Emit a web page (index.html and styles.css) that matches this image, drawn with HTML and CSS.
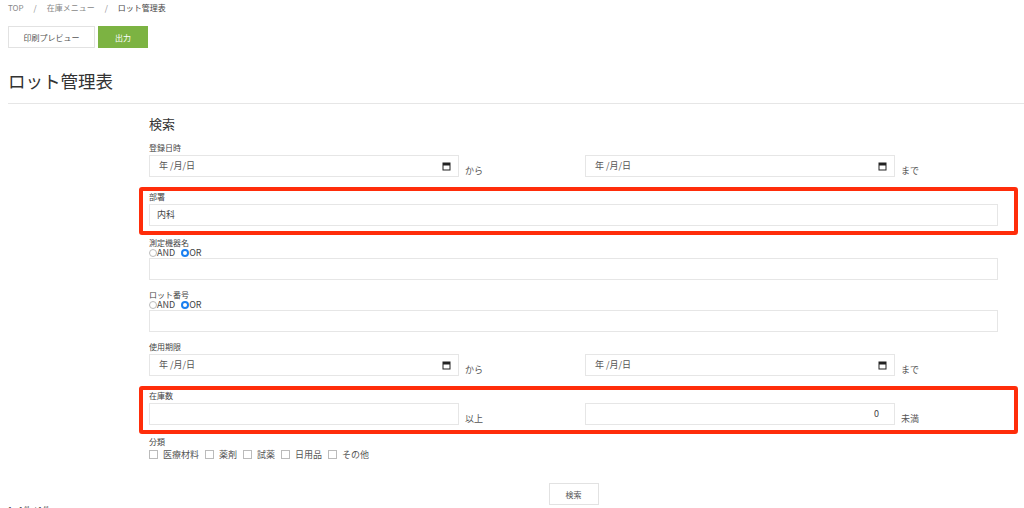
FILE: index.html
```html
<!DOCTYPE html>
<html lang="ja">
<head>
    <meta charset="UTF-8">
    <meta name="viewport" content="width=device-width, initial-scale=1.0">
    <title>ロット管理表</title>
    <link rel="stylesheet" href="styles.css">
</head>
<body>
    <div class="breadcrumb">
        <span>TOP</span>
        <span class="sep">/</span>
        <span>在庫メニュー</span>
        <span class="sep">/</span>
        <span class="current">ロット管理表</span>
    </div>

    <div class="actions">
        <button class="btn">印刷プレビュー</button>
        <button class="btn btn-green">出力</button>
    </div>

    <h1 class="page-title">ロット管理表</h1>
    <hr class="divider">

    <div class="search">
        <h2 class="search-title">検索</h2>

        <div class="group">
            <div class="label">登録日時</div>
            <div class="range">
                <div class="input date"><span>年 /月/日</span><svg class="cal" viewBox="0 0 9 9"><rect x="1" y="1" width="7" height="7" fill="none" stroke="#222" stroke-width="1"/><rect x="1" y="1" width="7" height="2.5" fill="#222"/></svg></div>
                <div class="suffix">から</div>
                <div class="input date"><span>年 /月/日</span><svg class="cal" viewBox="0 0 9 9"><rect x="1" y="1" width="7" height="7" fill="none" stroke="#222" stroke-width="1"/><rect x="1" y="1" width="7" height="2.5" fill="#222"/></svg></div>
                <div class="suffix">まで</div>
            </div>
        </div>

        <div class="group marked">
            <div class="label">部署</div>
            <div class="input wide">内科</div>
        </div>

        <div class="group">
            <div class="label">測定機器名</div>
            <div class="radios">
                <span class="radio"></span><span>AND</span>
                <span class="radio checked"></span><span>OR</span>
            </div>
            <div class="input wide"></div>
        </div>

        <div class="group">
            <div class="label">ロット番号</div>
            <div class="radios">
                <span class="radio"></span><span>AND</span>
                <span class="radio checked"></span><span>OR</span>
            </div>
            <div class="input wide"></div>
        </div>

        <div class="group">
            <div class="label">使用期限</div>
            <div class="range">
                <div class="input date"><span>年 /月/日</span><svg class="cal" viewBox="0 0 9 9"><rect x="1" y="1" width="7" height="7" fill="none" stroke="#222" stroke-width="1"/><rect x="1" y="1" width="7" height="2.5" fill="#222"/></svg></div>
                <div class="suffix">から</div>
                <div class="input date"><span>年 /月/日</span><svg class="cal" viewBox="0 0 9 9"><rect x="1" y="1" width="7" height="7" fill="none" stroke="#222" stroke-width="1"/><rect x="1" y="1" width="7" height="2.5" fill="#222"/></svg></div>
                <div class="suffix">まで</div>
            </div>
        </div>

        <div class="group marked">
            <div class="label">在庫数</div>
            <div class="range">
                <div class="input"></div>
                <div class="suffix">以上</div>
                <div class="input number">0</div>
                <div class="suffix">未満</div>
            </div>
        </div>

        <div class="group">
            <div class="label">分類</div>
            <div class="checks">
                <span class="check"></span><span>医療材料</span>
                <span class="check"></span><span>薬剤</span>
                <span class="check"></span><span>試薬</span>
                <span class="check"></span><span>日用品</span>
                <span class="check"></span><span>その他</span>
            </div>
        </div>

        <div class="submit">
            <button class="btn btn-search">検索</button>
        </div>
    </div>

    <div class="count">1 - 1件 / 1件</div>
</body>
</html>
```

FILE: styles.css
```css
body {
    margin: 0;
    padding: 2px 8px 0;
    font-family: "Noto Sans CJK JP", "Noto Sans", sans-serif;
    color: #444;
    background: #fff;
}
.breadcrumb {
    font-size: 8px;
    line-height: 12px;
    color: #888;
    display: flex;
}
.breadcrumb .sep {
    margin: 0 10px;
}
.breadcrumb .current {
    color: #444;
}
.actions {
    display: flex;
    gap: 3px;
    margin-top: 12px;
}
.btn {
    font-family: inherit;
    font-size: 8px;
    height: 22px;
    padding: 0;
    background: #fff;
    border: 1px solid #e2e2e2;
    color: #555;
    cursor: pointer;
}
.actions .btn {
    width: 87px;
}
.actions .btn-green {
    width: 50px;
    background: #7cb342;
    border-color: #7cb342;
    color: #fff;
}
.page-title {
    font-size: 17.5px;
    font-weight: normal;
    line-height: 24px;
    margin: 21px 0 0;
    color: #333;
}
.divider {
    border: none;
    border-top: 1px solid #e6e6e6;
    margin: 10px -8px 0 0;
}
.search {
    margin-left: 141px;
    width: 849px;
}
.search-title {
    font-size: 13px;
    font-weight: normal;
    line-height: 18px;
    margin: 11px 0 0;
    color: #333;
}
.group {
    position: relative;
    margin-top: 10px;
}
.group.marked {
    margin-top: 15px;
}
.group.marked + .group {
    margin-top: 12px;
}
.group.marked::after {
    content: '';
    position: absolute;
    top: -5px;
    bottom: -9px;
    left: -10px;
    right: -20px;
    border: 4px solid #ff2d0a;
    border-radius: 3px;
    pointer-events: none;
}
.label {
    font-size: 8px;
    line-height: 10px;
    margin-bottom: 2px;
    color: #444;
}
.input {
    box-sizing: border-box;
    height: 22px;
    border: 1px solid #e6e6e6;
    background: #fff;
    font-size: 9px;
    line-height: 20px;
    padding: 0 7px;
    color: #444;
}
.input.wide {
    width: 849px;
}
.input.date {
    display: flex;
    align-items: center;
    justify-content: space-between;
    padding: 0 7px 0 9px;
    color: #555;
}
.cal {
    width: 9px;
    height: 9px;
}
.input.number {
    text-align: right;
    padding-right: 15px;
}
.range {
    display: grid;
    grid-template-columns: 310px 126px 310px 103px;
}
.suffix {
    align-self: end;
    font-size: 9px;
    line-height: 12px;
    padding-left: 6px;
    color: #555;
}
.radios {
    display: flex;
    align-items: center;
    font-size: 9px;
    line-height: 9px;
    margin: -2px 0 1px;
    color: #444;
}
.radio {
    box-sizing: border-box;
    width: 8px;
    height: 8px;
    border: 1px solid #bbb;
    border-radius: 50%;
    background: #fff;
}
.radio.checked {
    margin-left: 6px;
    border: 2.5px solid #1a7ff0;
    background: #fff;
}
.checks {
    display: flex;
    align-items: center;
    font-size: 9px;
    line-height: 11px;
    color: #555;
}
.check {
    box-sizing: border-box;
    width: 9px;
    height: 9px;
    border: 1px solid #bbb;
    margin: 0 5px 0 6px;
}
.check:first-child {
    margin-left: 0;
}
.submit {
    display: flex;
    justify-content: center;
    margin-top: 23px;
}
.btn-search {
    width: 50px;
}
.count {
    font-size: 8px;
    line-height: 10px;
    margin-top: 0;
}
```
